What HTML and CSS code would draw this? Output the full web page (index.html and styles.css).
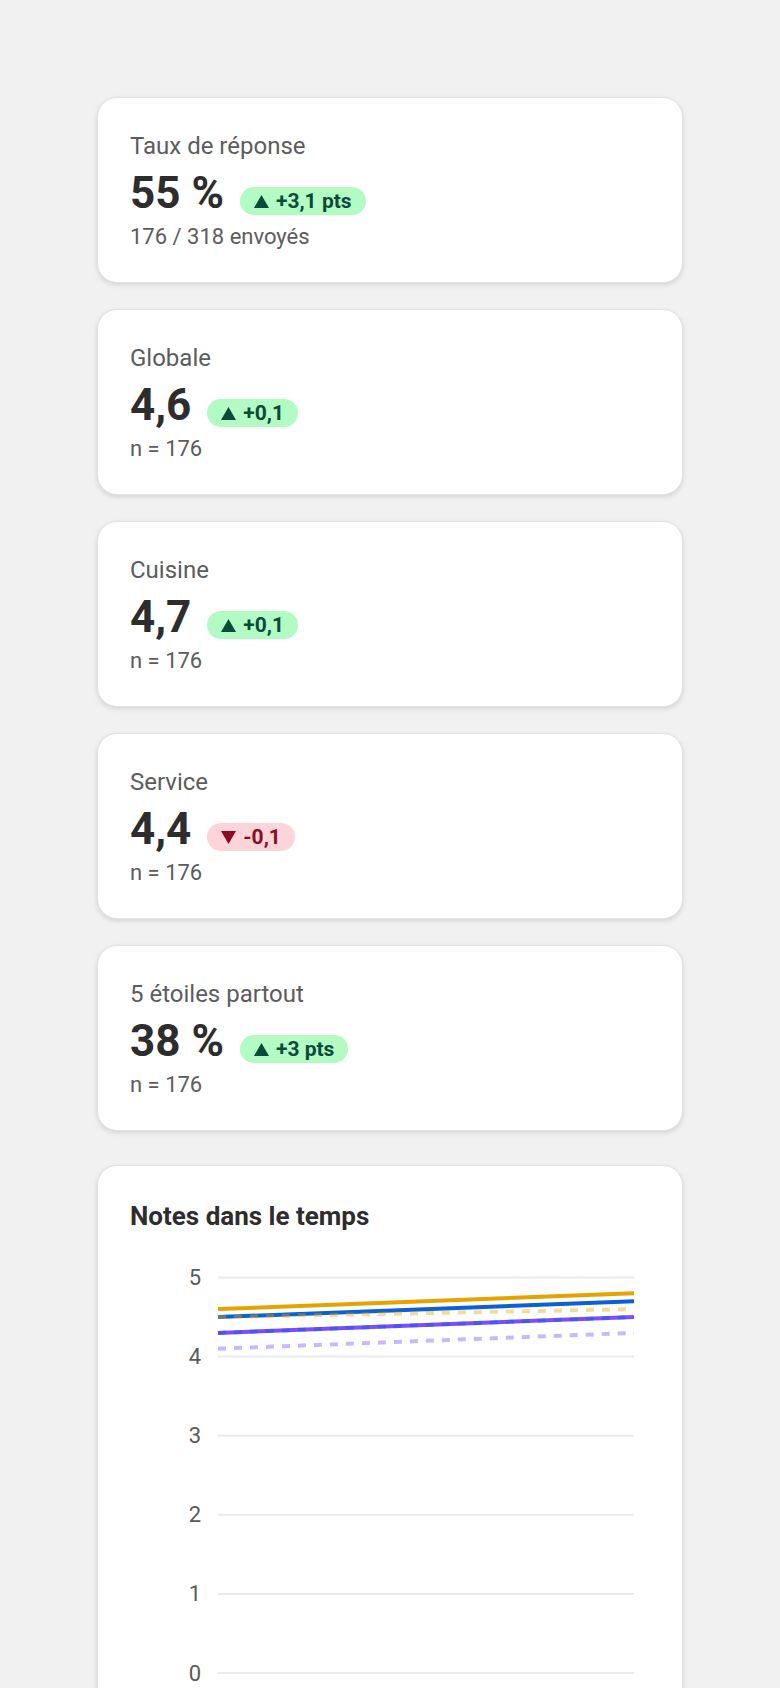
FILE: index.html
```html
<!DOCTYPE html>
<html lang="fr">

<head>
  <meta charset="UTF-8"/>
  <meta name="viewport" content="width=device-width, initial-scale=1.0"/>
  <title>Satisfaction clients</title>
  <link rel="stylesheet" href="styles.css">
</head>

<body>
<main class="page">
  <section class="stat-card">
    <p class="stat-label">Taux de réponse</p>
    <div class="stat-row">
      <span class="stat-value">55 %</span>
      <span class="delta delta--up">
        <svg class="delta-arrow" viewBox="0 0 15 13"><path d="M7.5 0 L15 13 L0 13 Z"/></svg>+3,1 pts
      </span>
    </div>
    <p class="stat-sub">176 / 318 envoyés</p>
  </section>

  <section class="stat-card">
    <p class="stat-label">Globale</p>
    <div class="stat-row">
      <span class="stat-value">4,6</span>
      <span class="delta delta--up">
        <svg class="delta-arrow" viewBox="0 0 15 13"><path d="M7.5 0 L15 13 L0 13 Z"/></svg>+0,1
      </span>
    </div>
    <p class="stat-sub">n = 176</p>
  </section>

  <section class="stat-card">
    <p class="stat-label">Cuisine</p>
    <div class="stat-row">
      <span class="stat-value">4,7</span>
      <span class="delta delta--up">
        <svg class="delta-arrow" viewBox="0 0 15 13"><path d="M7.5 0 L15 13 L0 13 Z"/></svg>+0,1
      </span>
    </div>
    <p class="stat-sub">n = 176</p>
  </section>

  <section class="stat-card">
    <p class="stat-label">Service</p>
    <div class="stat-row">
      <span class="stat-value">4,4</span>
      <span class="delta delta--down">
        <svg class="delta-arrow" viewBox="0 0 15 13"><path d="M0 0 L15 0 L7.5 13 Z"/></svg>-0,1
      </span>
    </div>
    <p class="stat-sub">n = 176</p>
  </section>

  <section class="stat-card">
    <p class="stat-label">5 étoiles partout</p>
    <div class="stat-row">
      <span class="stat-value">38 %</span>
      <span class="delta delta--up">
        <svg class="delta-arrow" viewBox="0 0 15 13"><path d="M7.5 0 L15 13 L0 13 Z"/></svg>+3 pts
      </span>
    </div>
    <p class="stat-sub">n = 176</p>
  </section>

  <section class="chart-card">
    <h2 class="chart-title">Notes dans le temps</h2>
    <svg class="chart" width="520" height="460" viewBox="0 0 520 460">
      <g class="grid">
        <line x1="88" x2="504" y1="27.5" y2="27.5"/>
        <line x1="88" x2="504" y1="106.6" y2="106.6"/>
        <line x1="88" x2="504" y1="185.7" y2="185.7"/>
        <line x1="88" x2="504" y1="264.8" y2="264.8"/>
        <line x1="88" x2="504" y1="343.9" y2="343.9"/>
        <line x1="88" x2="504" y1="423" y2="423"/>
      </g>
      <g class="axis">
        <text x="71" y="27.5">5</text>
        <text x="71" y="106.6">4</text>
        <text x="71" y="185.7">3</text>
        <text x="71" y="264.8">2</text>
        <text x="71" y="343.9">1</text>
        <text x="71" y="423">0</text>
      </g>
      <!-- année en cours -->
      <line class="serie serie--cuisine" x1="88" x2="504" y1="59.1" y2="43.3"/>
      <line class="serie serie--globale" x1="88" x2="504" y1="67.05" y2="51.2"/>
      <line class="serie serie--service" x1="88" x2="504" y1="82.9" y2="67.05"/>
      <!-- année précédente -->
      <line class="serie serie--cuisine serie--prev" x1="88" x2="504" y1="67.05" y2="59.1"/>
      <line class="serie serie--globale serie--prev" x1="88" x2="504" y1="82.9" y2="67.05"/>
      <line class="serie serie--service serie--prev" x1="88" x2="504" y1="98.7" y2="82.9"/>
    </svg>
  </section>
</main>
</body>

</html>
```

FILE: styles.css
```css
body {
  margin: 0;
  background: #f1f1f1;
  font-family: Roboto, 'Liberation Sans', sans-serif;
  color: #2d2d2d;
}

.page {
  width: 586px;
  margin: 0 auto;
  padding: 97px 0 40px;
  display: flex;
  flex-direction: column;
  gap: 26px;
}

.stat-card,
.chart-card {
  background: white;
  border: 1px solid #e2e2e2;
  border-radius: 20px;
  box-shadow: 0 2px 5px rgba(0, 0, 0, 0.12);
}

.stat-card {
  padding: 32px 32px 30px;
}

.stat-label {
  margin: 0;
  font-size: 24px;
  line-height: 32px;
  color: #5c5c5c;
}

.stat-row {
  display: flex;
  align-items: baseline;
  gap: 16px;
  margin-top: 5px;
}

.stat-value {
  font-size: 44px;
  line-height: 52px;
  font-weight: 700;
  color: #2d2d2d;
}

.delta {
  display: inline-flex;
  align-items: baseline;
  padding: 2px 14px;
  border-radius: 999px;
  font-size: 21px;
  line-height: 24px;
  font-weight: 700;
}

.delta-arrow {
  width: 15px;
  height: 13px;
  margin-right: 7px;
  fill: currentColor;
}

.delta--up {
  background: #b2fbc2;
  color: #0a4a3a;
}

.delta--down {
  background: #fdd4d8;
  color: #8c0b24;
}

.stat-sub {
  margin: 3px 0 0;
  font-size: 22px;
  line-height: 30px;
  color: #5c5c5c;
}

.chart-card {
  margin-top: 8px;
  padding: 32px 32px 40px;
}

.chart-title {
  margin: 0;
  font-size: 26px;
  line-height: 36px;
  font-weight: 700;
  color: #2d2d2d;
}

.chart {
  display: block;
  margin-top: 16px;
}

.grid line {
  stroke: #ebebeb;
  stroke-width: 2;
}

.axis text {
  font-family: Roboto, sans-serif;
  font-size: 22px;
  fill: #5a5a5a;
  text-anchor: end;
  dominant-baseline: central;
}

.serie {
  stroke-width: 4;
  fill: none;
}

.serie--cuisine {
  stroke: #e6a200;
}

.serie--globale {
  stroke: #0a60d6;
}

.serie--service {
  stroke: #7b4dff;
}

.serie--prev {
  stroke-opacity: 0.4;
  stroke-dasharray: 8 8;
}
```
